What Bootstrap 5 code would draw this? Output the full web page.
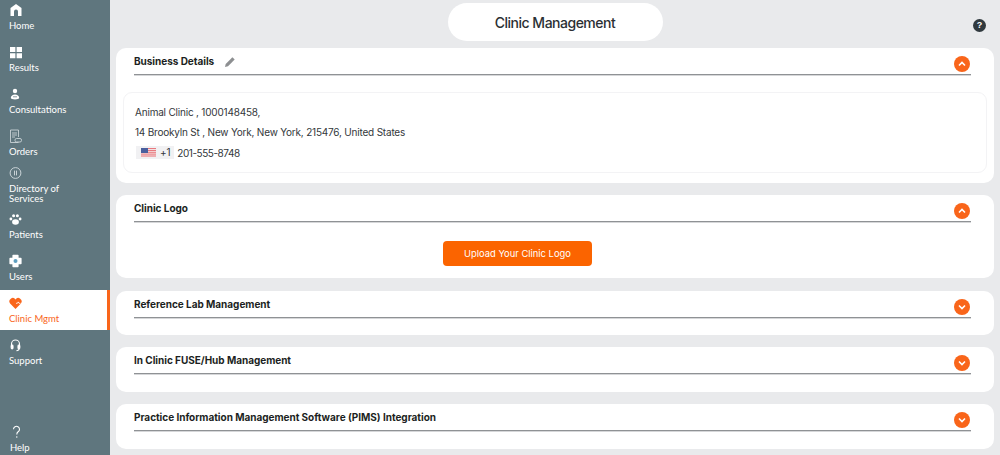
<!DOCTYPE html>
<html lang="en">
<head>
    <meta charset="UTF-8">
    <meta name="viewport" content="width=device-width, initial-scale=1.0">
    <title>Clinic Management</title>
    <link href="https://cdn.jsdelivr.net/npm/bootstrap@5.3.2/dist/css/bootstrap.min.css" rel="stylesheet">
    <style>
        html, body { height: 455px; overflow: hidden; }
        body { background: #e9eaec; font-family: Inter, "Liberation Sans", sans-serif; color: #2b2f33; }
        .side-rail { width: 110px; height: 455px; background: #5f767e; flex-shrink: 0; }
        .rail-item { display: block; height: 42px; padding: 3px 0 0 9px; color: #fff; font: 9.5px/10px Lato, sans-serif; text-decoration: none; flex-shrink: 0; }
        .rail-item svg { display: block; width: 14px; height: 14px; margin-bottom: 4px; fill: #fff; }
        .rail-two { height: 46px; margin-top: -5px; }
        .rail-on { height: 40px; margin-top: -3px; background: #fff; color: #f9651a; border-right: 3px solid #f9651a; padding-top: 6px; }
        .rail-on svg { fill: #f9651a; }
        .rail-after { margin-top: 5px; }
        .rail-help { padding-left: 10px; height: 33px; margin-top: auto; }
        .work-area { padding: 3px 6px 0 6px; min-width: 0; }
        .title-row { height: 38px; margin-bottom: 7px; }
        .title-pill { width: 215px; height: 38px; border-radius: 19px; background: #fff; font-size: 14px; font-weight: 500; letter-spacing: -.5px; }
        .help-dot { position: absolute; right: 8px; top: 15.5px; width: 13px; height: 13px; border-radius: 50%; background: #30393e; color: #fff; font: bold 9px/13px "Liberation Sans", sans-serif; text-align: center; }
        .panel { background: #fff; border-radius: 10px; margin-bottom: 12.3px; padding: 0 23px 0 18px; }
        .panel-head { height: 27px; border-bottom: 1px solid #8f9295; box-shadow: 0 1px 0 #d6d7d9; font-size: 10px; font-weight: 700; letter-spacing: -.03px; color: #1c1f22; }
        .head-label { padding-top: 1px; }
        .pencil-gap { gap: 10px; }
        .round-toggle { width: 16px; height: 16px; border-radius: 50%; background: #f9651a; border: 0; padding: 0; margin: 6px 1px 0 0; }
        .round-toggle svg { display: block; margin: auto; width: 8px; height: 8px; fill: none; stroke: #fff; stroke-width: 1.6; }
        .panel-biz { padding-bottom: 10px; }
        .biz-box { margin: 17px -16px 0 -11px; height: 81px; border: 1px solid #f3f3f5; border-radius: 9px; padding: 8.5px 11px; font-size: 10px; letter-spacing: -.2px; line-height: 20.5px; color: #33373b; }
        .dial-tag { background: #f1f1f3; padding: 0 4px 0 5px; height: 13px; line-height: 13px; margin: 0 3px 0 1px; }
        .flag-svg { width: 15px; height: 9px; margin-right: 4px; }
        .phone-num { letter-spacing: -.45px; }
        .upload-btn { width: 149px; height: 25px; background: #fb6400; color: #fff; border: 0; border-radius: 4px; font-size: 9.4px; font-weight: 400; padding: 0; }
        .upload-wrap { padding: 19px 70px 12px 0; }
        .panel-closed { height: 44.5px; }
    </style>
</head>
<body>
<div class="d-flex">
    <nav class="side-rail d-flex flex-column">
        <a class="rail-item" href="#"><svg viewBox="0 0 14 14"><path d="M7 1 L12.5 5 V13 H9 V8.5 A2 2 0 0 0 5 8.5 V13 H1.5 V5 Z"/></svg>Home</a>
        <a class="rail-item" href="#"><svg viewBox="0 0 14 14"><path d="M1 2h5.4v5H1zM7.6 2H13v5H7.6zM1 8.2h5.4v5H1zM7.6 8.2H13v5H7.6z"/></svg>Results</a>
        <a class="rail-item" href="#"><svg viewBox="0 0 14 14"><circle cx="6" cy="4" r="2.2"/><path d="M1.8 11c0-2.2 2-3.4 4.2-3.4s4.2 1.2 4.2 3.4c0 .9-2 1.4-4.2 1.4S1.8 11.9 1.8 11z"/><path d="M4 9.8h4" stroke="#5f767e" stroke-width=".7"/></svg>Consultations</a>
        <a class="rail-item" href="#"><svg viewBox="0 0 14 14" style="fill:none;stroke:#d5dde0;stroke-width:.8"><path d="M1.5 13.5V1h8v7M1.5 13.5h8M3 4h5M3 6h5M3 8h3"/><rect x="6" y="9.5" width="6.5" height="3.5" rx="1.5"/></svg>Orders</a>
        <a class="rail-item rail-two" href="#"><svg viewBox="0 0 14 14" style="fill:none;stroke:#d5dde0;stroke-width:.9"><circle cx="6.5" cy="7" r="5.4"/><path d="M5.5 4.6v4.8M7.5 4.6v4.8"/></svg>Directory of<br>Services</a>
        <a class="rail-item" href="#"><svg viewBox="0 0 14 14"><ellipse cx="6.5" cy="10" rx="3.4" ry="2.8"/><circle cx="1.9" cy="7" r="1.4"/><circle cx="4.6" cy="3.8" r="1.5"/><circle cx="8.4" cy="3.8" r="1.5"/><circle cx="11.1" cy="7" r="1.4"/></svg>Patients</a>
        <a class="rail-item" href="#"><svg viewBox="0 0 14 14"><path d="M4.2 1.5h4.6v3h3v5h-3v3H4.2v-3h-3v-5h3z" stroke="#fff" stroke-width="1.6" stroke-linejoin="round"/><circle cx="6.5" cy="7" r="2" fill="#5f9fc0"/></svg>Users</a>
        <a class="rail-item rail-on" href="#"><svg viewBox="0 0 14 14"><path d="M6.5 13 L1.1 7.4 A3.3 3.3 0 0 1 6.5 3.4 A3.3 3.3 0 0 1 11.9 7.4 Z"/><path d="M7 7.3h1.4l.8-1.4 .8 1.4h1.5" fill="none" stroke="#fff" stroke-width=".8"/></svg>Clinic Mgmt</a>
        <a class="rail-item rail-after" href="#"><svg viewBox="0 0 14 14" style="fill:none;stroke:#fff;stroke-width:1.1"><path d="M2.5 9V6a4 4 0 0 1 8 0V9"/><rect x="2.2" y="7" width="1.8" height="4" rx=".9" fill="#fff"/><rect x="9" y="7" width="1.8" height="4" rx=".9" fill="#fff"/><path d="M10 11c0 1-1 1.6-2.5 1.6"/></svg>Support</a>
        <a class="rail-item rail-help" href="#"><svg viewBox="0 0 14 14" style="fill:none;stroke:#fff;stroke-width:1.1"><path d="M3.5 4.2a3 3 0 1 1 4.6 2.6C7 7.5 6.8 8.2 6.8 9.6"/><circle cx="6.8" cy="12" r=".7" fill="#fff" stroke="none"/></svg>Help</a>
    </nav>
    <main class="work-area flex-grow-1">
        <div class="title-row d-flex justify-content-center position-relative">
            <div class="title-pill d-flex align-items-center justify-content-center">Clinic Management</div>
            <span class="help-dot">?</span>
        </div>
        <section class="panel panel-biz">
            <div class="panel-head d-flex justify-content-between align-items-center">
                <span class="head-label d-flex align-items-center pencil-gap">Business Details
                    <svg width="12" height="12" viewBox="0 0 12 12"><path d="M1 11l.7-3L8.4 1.3l2.3 2.3L4 10.3z" fill="#8d8f91"/></svg>
                </span>
                <button class="round-toggle" type="button"><svg viewBox="0 0 8 8"><path d="M1 5.5L4 2.5l3 3"/></svg></button>
            </div>
            <div class="biz-box">
                <div>Animal Clinic , 1000148458,</div>
                <div>14 Brookyln St , New York, New York, 215476, United States</div>
                <div class="d-flex align-items-center">
                    <span class="dial-tag d-flex align-items-center">
                        <svg class="flag-svg" viewBox="0 0 15 9"><rect width="15" height="9" fill="#e8797f"/><path d="M0 1.5h15M0 3.7h15M0 5.9h15M0 8h15" stroke="#f6eeee" stroke-width=".9"/><rect width="7" height="5" fill="#4a5f9e"/></svg>+1
                    </span>
                    <span class="phone-num">201-555-8748</span>
                </div>
            </div>
        </section>
        <section class="panel">
            <div class="panel-head d-flex justify-content-between align-items-center">
                <span class="head-label">Clinic Logo</span>
                <button class="round-toggle" type="button"><svg viewBox="0 0 8 8"><path d="M1 5.5L4 2.5l3 3"/></svg></button>
            </div>
            <div class="upload-wrap d-flex justify-content-center">
                <button class="upload-btn" type="button">Upload Your Clinic Logo</button>
            </div>
        </section>
        <section class="panel panel-closed">
            <div class="panel-head d-flex justify-content-between align-items-center">
                <span class="head-label">Reference Lab Management</span>
                <button class="round-toggle" type="button"><svg viewBox="0 0 8 8"><path d="M1 2.5L4 5.5l3-3"/></svg></button>
            </div>
        </section>
        <section class="panel panel-closed">
            <div class="panel-head d-flex justify-content-between align-items-center">
                <span class="head-label">In Clinic FUSE/Hub Management</span>
                <button class="round-toggle" type="button"><svg viewBox="0 0 8 8"><path d="M1 2.5L4 5.5l3-3"/></svg></button>
            </div>
        </section>
        <section class="panel panel-closed">
            <div class="panel-head d-flex justify-content-between align-items-center">
                <span class="head-label">Practice Information Management Software (PIMS) Integration</span>
                <button class="round-toggle" type="button"><svg viewBox="0 0 8 8"><path d="M1 2.5L4 5.5l3-3"/></svg></button>
            </div>
        </section>
    </main>
</div>
<script src="https://cdn.jsdelivr.net/npm/bootstrap@5.3.2/dist/js/bootstrap.bundle.min.js"></script>
</body>
</html>
